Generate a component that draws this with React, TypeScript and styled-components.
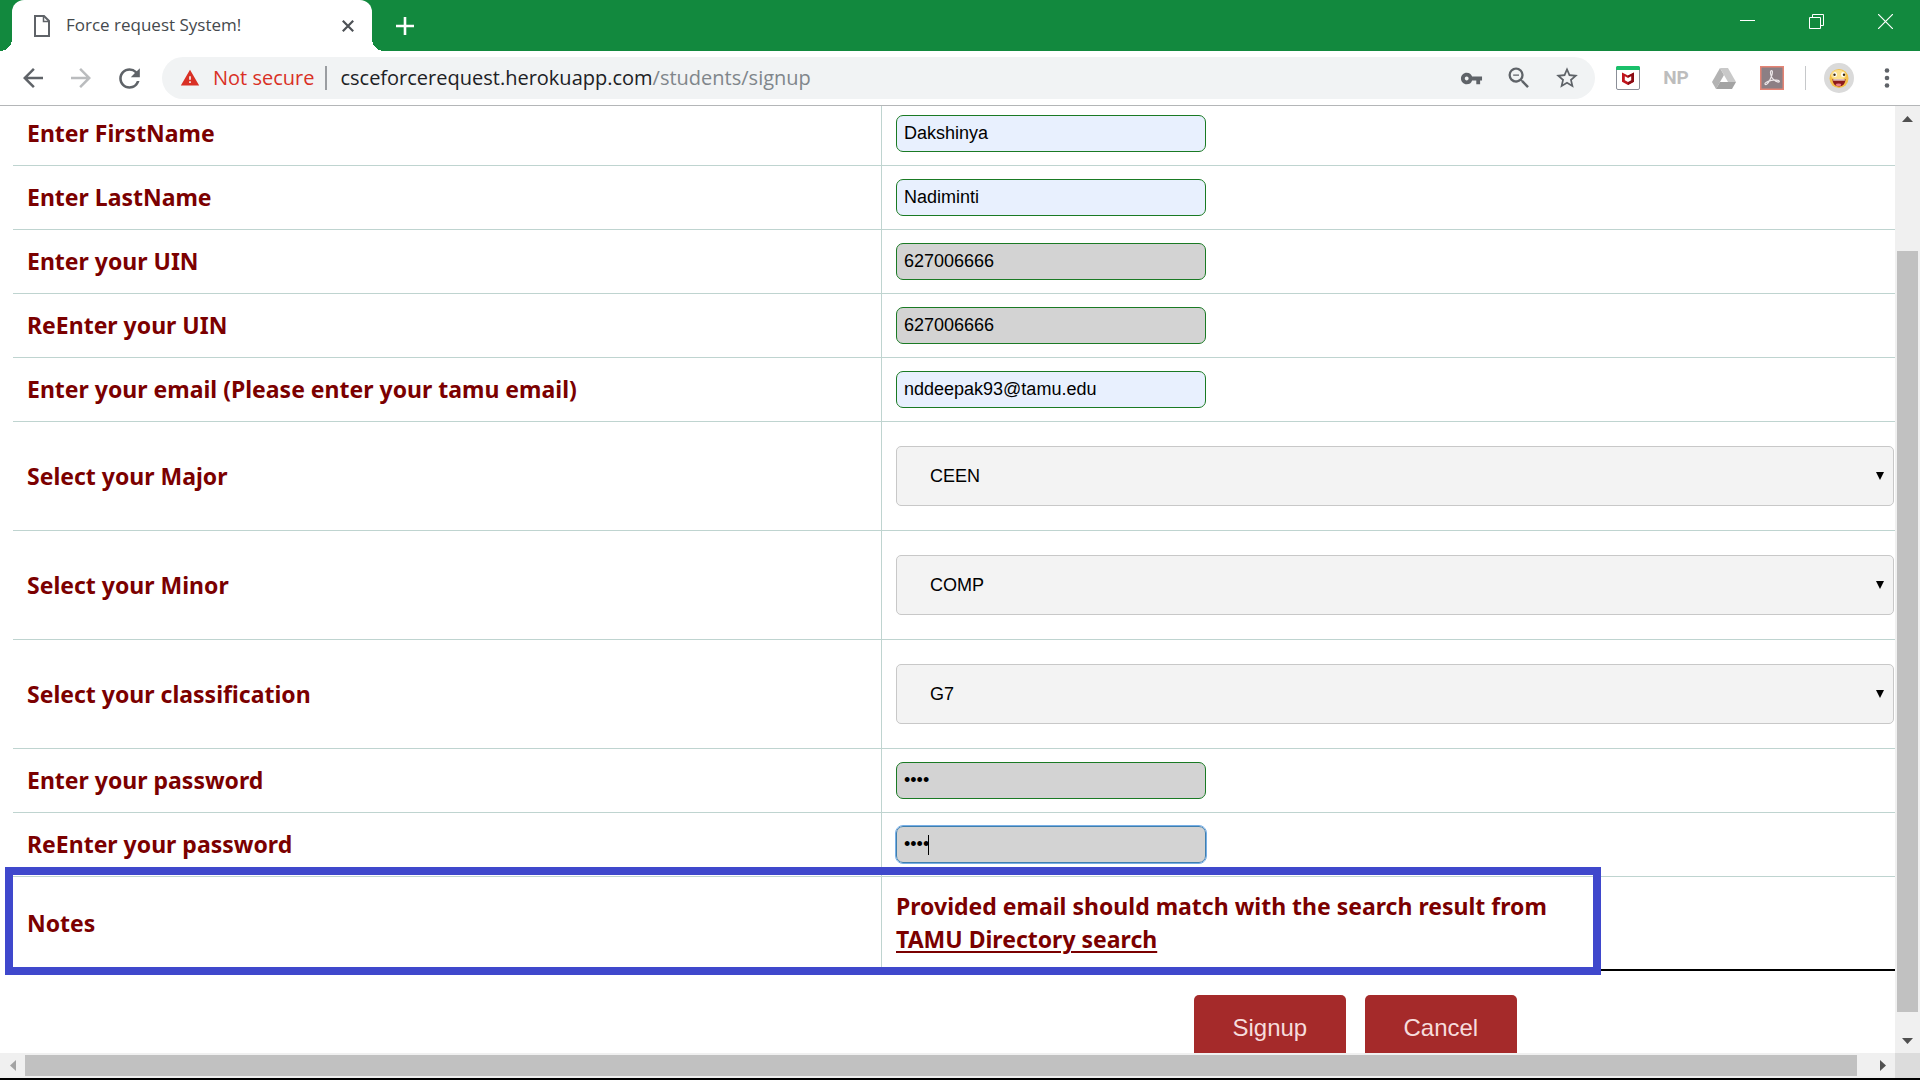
import React from "react";
import styled, { createGlobalStyle, css } from "styled-components";
import {
  MdArrowBack,
  MdArrowForward,
  MdRefresh,
  MdStarBorder,
  MdVpnKey,
  MdWarning,
  MdZoomOut,
} from "react-icons/md";

const color = {
  green: "#12893e",
  icon: "#5f6368",
  omnibox: "#f1f3f4",
  alert: "#d93025",
  maroon: "#7b0000",
  rule: "#bfd4d0",
  track: "#f0f0f0",
  thumb: "#c1c1c1",
  frame: "#3f48cc",
};

const uiFont = `"Open Sans", "Noto Sans", sans-serif`;
const labelFont = `Tahoma, "Noto Sans", sans-serif`;
const fieldFont = `"Liberation Sans", Arial, sans-serif`;

const GlobalStyle = createGlobalStyle`
  *, *::before, *::after { box-sizing: border-box; }
  body { margin: 0; background: #fff; overflow: hidden; }
  button { margin: 0; padding: 0; border: 0; background: none; cursor: pointer; }
`;

/* ---------- Browser chrome ---------- */

const Window = styled.div`
  display: flex;
  flex-direction: column;
  height: 100vh;
  border-bottom: 2px solid #000;
  font-family: ${uiFont};
`;

const TabStrip = styled.header`
  display: flex;
  flex: none;
  height: 51px;
  padding-left: 12px;
  background: ${color.green};
`;

const Tab = styled.div`
  position: relative;
  display: flex;
  align-items: center;
  width: 360px;
  padding: 0 14px 0 22px;
  border-radius: 12px 12px 0 0;
  background: #fff;

  &::before,
  &::after {
    content: "";
    position: absolute;
    bottom: 0;
    width: 12px;
    height: 12px;
  }
  &::before {
    right: 100%;
    background: radial-gradient(circle at 0 0, ${color.green} 12px, #fff 12px);
  }
  &::after {
    left: 100%;
    background: radial-gradient(circle at 100% 0, ${color.green} 12px, #fff 12px);
  }
`;

const TabTitle = styled.span`
  flex: 1;
  margin-left: 16px;
  padding-bottom: 2px;
  color: #45494d;
  font-size: 17px;
  line-height: 24px;
  white-space: nowrap;
`;

const IconButton = styled.button<{ $width?: number; $tone?: string }>`
  display: flex;
  flex: none;
  align-items: center;
  justify-content: center;
  width: ${(p) => p.$width ?? 48}px;
  color: ${(p) => p.$tone ?? color.icon};
`;

const WindowControls = styled.div`
  display: flex;
  height: 43px;
  margin-left: auto;
`;

const Toolbar = styled.div`
  display: flex;
  flex: none;
  align-items: center;
  height: 55px;
  padding: 0 9px;
  border-bottom: 1px solid #b4b6b8;
  background: #fff;
`;

const Omnibox = styled.div`
  display: flex;
  flex: 1;
  align-items: center;
  height: 42px;
  margin: 0 9px;
  padding: 0 4px 0 18px;
  border-radius: 21px;
  background: ${color.omnibox};
  font-size: 20px;
  line-height: 28px;
`;

const Security = styled.span`
  display: flex;
  align-items: center;
  gap: 13px;
  padding-right: 11px;
  border-right: 2px solid #9a9da1;
  color: ${color.alert};
  line-height: 24px;
  white-space: nowrap;
`;

const Address = styled.span`
  flex: 1;
  margin-left: 13px;
  color: #202124;
  white-space: nowrap;
`;

const AddressPath = styled.span`
  color: #80868b;
`;

const ToolbarRule = styled.span`
  width: 1px;
  height: 24px;
  margin: 0 9px;
  background: #c6c8ca;
`;

const NpMark = styled.span`
  color: #bdbdbd;
  font: bold 19px/24px "Roboto", sans-serif;
`;

/* ---------- Scroll bars ---------- */

const Body = styled.div`
  display: grid;
  flex: 1;
  grid-template-columns: minmax(0, 1fr) 25px;
  grid-template-rows: minmax(0, 1fr) 25px;
  min-height: 0;
`;

const ScrollBar = styled.div<{ $vertical?: boolean }>`
  display: flex;
  flex-direction: ${(p) => (p.$vertical ? "column" : "row")};
  align-items: stretch;
  padding: ${(p) => (p.$vertical ? "0 2px" : "2px 0")};
  background: ${color.track};
`;

const ScrollArrow = styled.button`
  display: flex;
  flex: 0 0 25px;
  align-items: center;
  justify-content: center;
`;

const Track = styled.span<{ $size: number; $thumb?: boolean }>`
  flex: ${(p) => p.$size} 1 0;
  background: ${(p) => (p.$thumb ? color.thumb : "transparent")};
`;

const Corner = styled.div`
  background: #dcdcdc;
`;

/* ---------- Sign-up form ---------- */

const Page = styled.main`
  overflow: hidden;
`;

const Form = styled.form`
  margin-top: -4px;
`;

const Rows = styled.div`
  margin-left: 13px;
`;

const Row = styled.div<{ $last?: boolean }>`
  position: relative;
  display: grid;
  grid-template-columns: 868fr 1014fr;
  border-bottom: ${(p) => (p.$last ? "2px solid #000" : `1px solid ${color.rule}`)};
`;

const boldText = css`
  color: ${color.maroon};
  font-family: ${labelFont};
  font-size: 23px;
  font-weight: 700;
  line-height: 33px;
`;

const LabelCell = styled.div`
  display: flex;
  align-items: center;
  padding-left: 14px;
  ${boldText}
`;

const FieldCell = styled.div<{ $tall?: boolean }>`
  display: flex;
  padding: ${(p) => (p.$tall ? "24px 1px 24px 14px" : "13px 1px 13px 14px")};
  border-left: 1px solid ${color.rule};
`;

const InputWrap = styled.div`
  position: relative;
  display: flex;
`;

const Input = styled.input<{ $filled?: boolean; $focused?: boolean }>`
  width: 310px;
  height: 37px;
  padding: 0 7px;
  border: 1px solid ${(p) => (p.$focused ? "#3f7fae" : "#1a7a24")};
  border-radius: 7px;
  outline: ${(p) => (p.$focused ? "1px solid #76aee6" : "none")};
  background: ${(p) => (p.$filled ? "#e8f0fe" : "#d3d3d3")};
  color: #000;
  font-family: ${fieldFont};
  font-size: 18px;
`;

const Caret = styled.span`
  position: absolute;
  top: 9px;
  left: 32px;
  width: 1px;
  height: 20px;
  background: #000;
`;

const SelectWrap = styled.div`
  position: relative;
  flex: 1;
  display: flex;
`;

const Select = styled.select`
  width: 100%;
  height: 60px;
  padding: 0 33px;
  border: 1px solid #c8c8c8;
  border-radius: 5px;
  appearance: none;
  background: #f3f3f3;
  color: #000;
  font-family: ${fieldFont};
  font-size: 18px;
`;

const SelectArrow = styled.svg`
  position: absolute;
  top: 26px;
  right: 10px;
  pointer-events: none;
`;

const NoteCell = styled.p`
  margin: 0;
  padding: 13px 14px;
  border-left: 1px solid ${color.rule};
  ${boldText}
`;

const NoteLink = styled.a`
  color: inherit;
  text-decoration: underline;
  text-decoration-thickness: 2px;
  text-underline-offset: 3px;
`;

const Highlight = styled.span`
  position: absolute;
  top: -10px;
  bottom: -6px;
  left: -8px;
  width: 84.8%;
  border: 8px solid ${color.frame};
  pointer-events: none;
`;

const Actions = styled.div`
  display: flex;
  gap: 19px;
  margin: 24px 0 0 63%;
`;

const ActionButton = styled.button`
  && {
    min-width: 152px;
    height: 66px;
    padding: 0 38px;
    border-radius: 5px;
    background: #a52a2a;
    color: #f6dcdc;
    font-family: ${fieldFont};
    font-size: 24px;
  }
`;

/* ---------- Drawings ---------- */

const PageIcon = () => (
  <svg width="16" height="22" viewBox="0 0 16 22" fill="none" stroke="#5f6368" strokeWidth="2">
    <path d="M1 1h9l5 5v15H1z" />
    <path d="M9.500 1v5.500H15" strokeWidth="1.500" />
  </svg>
);

const CloseIcon = () => (
  <svg width="12" height="12" viewBox="0 0 12 12" stroke="#4d5156" strokeWidth="2.200">
    <path d="M.8.8l10.400 10.400M11.200.8L.8 11.200" />
  </svg>
);

const PlusIcon = () => (
  <svg width="18" height="18" viewBox="0 0 18 18" stroke="#fff" strokeWidth="2.600">
    <path d="M9 0v18M0 9h18" />
  </svg>
);

const MinimizeIcon = () => (
  <svg width="15" height="15" viewBox="0 0 15 15" stroke="#fff">
    <path d="M0 6.500h15" />
  </svg>
);

const RestoreIcon = () => (
  <svg width="15" height="15" viewBox="0 0 15 15" fill="none" stroke="#fff">
    <path d="M.5 3.500h11v11H.5zM3.500 3.500v-3h11v11h-3" />
  </svg>
);

const WindowCloseIcon = () => (
  <svg width="15" height="15" viewBox="0 0 15 15" stroke="#fff" strokeWidth="1.200">
    <path d="M0 0l15 15M15 0L0 15" />
  </svg>
);

const ShieldIcon = () => (
  <svg width="24" height="24" viewBox="0 0 24 24">
    <rect x=".5" y=".5" width="23" height="23" rx="1.500" fill="#fff" stroke="#8b8f98" />
    <path d="M0 4V1.500Q0 0 1.500 0h21Q24 0 24 1.500V4z" fill="#1ac06a" />
    <path d="M6 6.500l6 3 6-3v9.300L12 19l-6-3.200z" fill="#c0141c" />
    <path d="M12 9.500l6-3v9.300L12 19v-3l3.200-1.700v-4L12 12z" fill="#8a0c14" />
    <path d="M8.800 10.300l3.200 1.600 3.200-1.600v4L12 16l-3.200-1.700z" fill="#fff" />
  </svg>
);

const DriveIcon = () => (
  <svg width="24" height="21" viewBox="0 0 24 21">
    <path d="M8 0L0 14l4 7 8-14z" fill="#b3b3b3" />
    <path d="M8 0h8l8 14h-8z" fill="#c9c9c9" />
    <path d="M8 14h16l-4 7H4z" fill="#a3a3a3" />
  </svg>
);

const AcrobatIcon = () => (
  <svg width="24" height="24" viewBox="0 0 24 24" fill="none">
    <rect x=".75" y=".75" width="22.500" height="22.500" fill="#8c7f84" stroke="#e58474" strokeWidth="1.500" />
    <path
      d="M5.200 18.300c-1.200-1.200 2.300-3.200 6.300-3.900 4-.7 7.600-.5 7.800.9.100 1.300-2.800.9-5.300-1.400-2.300-2.100-3.600-5.500-3.500-7.800.1-2 1.900-2.100 1.900 0 0 2.600-1.700 6.600-3.500 9.600-1.300 2.200-2.900 3.400-3.700 2.600z"
      stroke="#eee9ea"
      strokeWidth="1.200"
    />
  </svg>
);

const Avatar = () => (
  <svg width="30" height="30" viewBox="0 0 30 30">
    <circle cx="15" cy="15" r="15" fill="#dadada" />
    <circle cx="15" cy="15.500" r="9.500" fill="#f5c04a" />
    <ellipse cx="14.500" cy="12" rx="7.500" ry="5" fill="#fbe08d" />
    <ellipse cx="11" cy="11.500" rx="2" ry="2.600" fill="#fff" />
    <ellipse cx="19" cy="11.500" rx="2" ry="2.600" fill="#fff" />
    <circle cx="10.500" cy="11.700" r="1.200" fill="#3b2a10" />
    <circle cx="20" cy="11.700" r="1.200" fill="#3b2a10" />
    <path d="M8.500 16h13c0 4.500-2.700 7.500-6.500 7.500s-6.500-3-6.500-7.500z" fill="#8c1a1a" />
    <path d="M9.200 16.200h11.600v1.400H9.200z" fill="#f6e6dc" />
    <ellipse cx="14.500" cy="21.800" rx="2.800" ry="1.400" fill="#ee7f8c" />
  </svg>
);

const DotsIcon = () => (
  <svg width="6" height="20" viewBox="0 0 6 20" fill={color.icon}>
    <circle cx="3" cy="2.500" r="2.300" />
    <circle cx="3" cy="10" r="2.300" />
    <circle cx="3" cy="17.500" r="2.300" />
  </svg>
);

const arrows = {
  up: { size: [11, 6], d: "M0 6L5.500 0 11 6z" },
  down: { size: [11, 6], d: "M0 0h11L5.500 6z" },
  left: { size: [6, 11], d: "M6 0v11L0 5.500z" },
  right: { size: [6, 11], d: "M0 0v11l6-5.500z" },
};

const Arrow = ({ dir, fill = "#505050" }: { dir: keyof typeof arrows; fill?: string }) => (
  <svg width={arrows[dir].size[0]} height={arrows[dir].size[1]}>
    <path d={arrows[dir].d} fill={fill} />
  </svg>
);

/* ---------- Form rows ---------- */

type TextRowProps = {
  id: string;
  label: string;
  value: string;
  type?: string;
  filled?: boolean;
  focused?: boolean;
};

function TextRow({ id, label, value, type = "text", filled, focused }: TextRowProps) {
  return (
    <Row>
      <LabelCell>
        <label htmlFor={id}>{label}</label>
      </LabelCell>
      <FieldCell>
        <InputWrap>
          <Input id={id} type={type} defaultValue={value} $filled={filled} $focused={focused} />
          {focused && <Caret />}
        </InputWrap>
      </FieldCell>
    </Row>
  );
}

function SelectRow({ id, label, value }: { id: string; label: string; value: string }) {
  return (
    <Row>
      <LabelCell>
        <label htmlFor={id}>{label}</label>
      </LabelCell>
      <FieldCell $tall>
        <SelectWrap>
          <Select id={id} defaultValue={value}>
            <option>{value}</option>
          </Select>
          <SelectArrow width="8" height="8" viewBox="0 0 8 8">
            <path d="M0 0h8L4 8z" />
          </SelectArrow>
        </SelectWrap>
      </FieldCell>
    </Row>
  );
}

export default function App() {
  return (
    <Window>
      <GlobalStyle />
      <TabStrip>
        <Tab>
          <PageIcon />
          <TabTitle>Force request System!</TabTitle>
          <IconButton $width={20} aria-label="Close tab">
            <CloseIcon />
          </IconButton>
        </Tab>
        <IconButton $width={66} aria-label="New tab">
          <PlusIcon />
        </IconButton>
        <WindowControls>
          <IconButton $width={69} aria-label="Minimize">
            <MinimizeIcon />
          </IconButton>
          <IconButton $width={69} aria-label="Restore">
            <RestoreIcon />
          </IconButton>
          <IconButton $width={69} aria-label="Close window">
            <WindowCloseIcon />
          </IconButton>
        </WindowControls>
      </TabStrip>

      <Toolbar>
        <IconButton aria-label="Back">
          <MdArrowBack size={30} />
        </IconButton>
        <IconButton aria-label="Forward" $tone="#babcbe">
          <MdArrowForward size={30} />
        </IconButton>
        <IconButton aria-label="Reload">
          <MdRefresh size={31} />
        </IconButton>
        <Omnibox>
          <Security>
            <MdWarning size={20} />
            Not secure
          </Security>
          <Address>
            csceforcerequest.herokuapp.com<AddressPath>/students/signup</AddressPath>
          </Address>
          <IconButton aria-label="Saved passwords">
            <MdVpnKey size={23} />
          </IconButton>
          <IconButton aria-label="Zoom">
            <MdZoomOut size={28} />
          </IconButton>
          <IconButton aria-label="Bookmark this page">
            <MdStarBorder size={26} />
          </IconButton>
        </Omnibox>
        <IconButton aria-label="WebAdvisor">
          <ShieldIcon />
        </IconButton>
        <IconButton>
          <NpMark>NP</NpMark>
        </IconButton>
        <IconButton aria-label="Drive">
          <DriveIcon />
        </IconButton>
        <IconButton aria-label="Acrobat">
          <AcrobatIcon />
        </IconButton>
        <ToolbarRule />
        <IconButton aria-label="Profile">
          <Avatar />
        </IconButton>
        <IconButton aria-label="Menu">
          <DotsIcon />
        </IconButton>
      </Toolbar>

      <Body>
        <Page>
          <Form onSubmit={(e) => e.preventDefault()}>
            <Rows>
              <TextRow id="first" label="Enter FirstName" value="Dakshinya" filled />
              <TextRow id="last" label="Enter LastName" value="Nadiminti" filled />
              <TextRow id="uin" label="Enter your UIN" value="627006666" />
              <TextRow id="uin2" label="ReEnter your UIN" value="627006666" />
              <TextRow
                id="email"
                label="Enter your email (Please enter your tamu email)"
                value="nddeepak93@tamu.edu"
                filled
              />
              <SelectRow id="major" label="Select your Major" value="CEEN" />
              <SelectRow id="minor" label="Select your Minor" value="COMP" />
              <SelectRow id="class" label="Select your classification" value="G7" />
              <TextRow id="pw" label="Enter your password" value="abcd" type="password" />
              <TextRow id="pw2" label="ReEnter your password" value="abcd" type="password" focused />
              <Row $last>
                <LabelCell>Notes</LabelCell>
                <NoteCell>
                  Provided email should match with the search result from
                  <br />
                  <NoteLink href="#directory">TAMU Directory search</NoteLink>
                </NoteCell>
                <Highlight />
              </Row>
            </Rows>
            <Actions>
              <ActionButton type="submit">Signup</ActionButton>
              <ActionButton type="button">Cancel</ActionButton>
            </Actions>
          </Form>
        </Page>
        <ScrollBar $vertical>
          <ScrollArrow aria-label="Scroll up">
            <Arrow dir="up" />
          </ScrollArrow>
          <Track $size={120} />
          <Track $size={761} $thumb />
          <Track $size={16} />
          <ScrollArrow aria-label="Scroll down">
            <Arrow dir="down" />
          </ScrollArrow>
        </ScrollBar>
        <ScrollBar>
          <ScrollArrow aria-label="Scroll left">
            <Arrow dir="left" fill="#a3a3a3" />
          </ScrollArrow>
          <Track $size={1832} $thumb />
          <Track $size={13} />
          <ScrollArrow aria-label="Scroll right">
            <Arrow dir="right" />
          </ScrollArrow>
        </ScrollBar>
        <Corner />
      </Body>
    </Window>
  );
}
